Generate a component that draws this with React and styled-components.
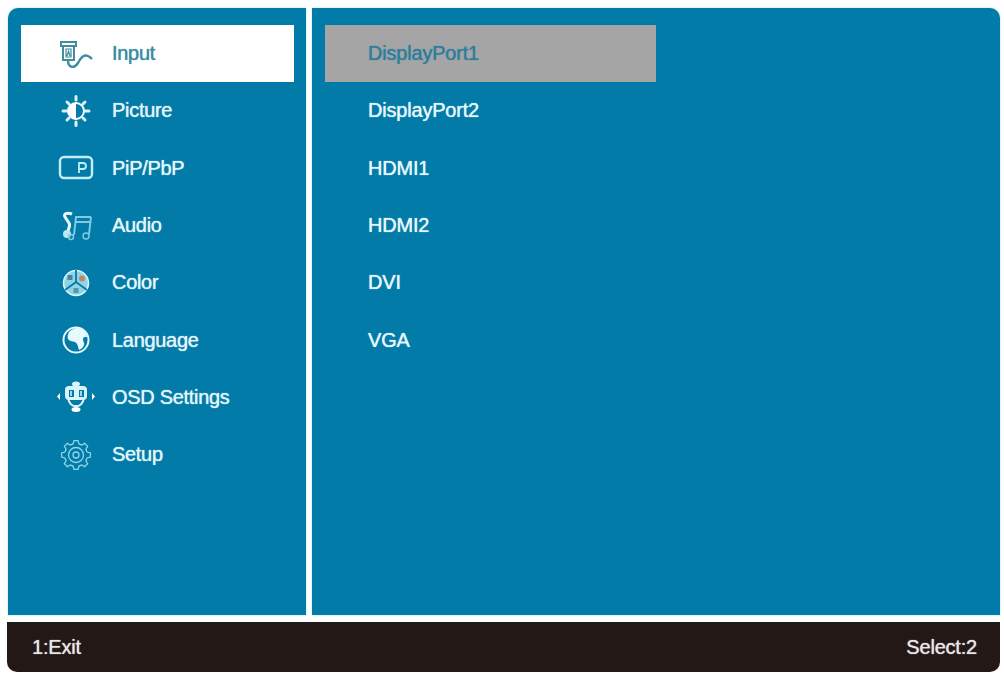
import styled, { createGlobalStyle } from 'styled-components';

const GlobalStyle = createGlobalStyle`
    html, body {
        margin: 0;
        padding: 0;
        background: #fff;
    }
`;

const Icon = styled.svg.attrs({ width: 40, height: 32, viewBox: '0 0 40 32', fill: 'none' })`
    flex: none;
    color: ${(props) => (props.$active ? '#3f8d9f' : '#c4edf5')};
`;

// 8 tooth gear outline around the middle of the icon box
const gearPath = () => {
    const pts = [];
    for (let i = 0; i < 8; i++) {
        const a = (i * Math.PI) / 4 - Math.PI / 2;
        [[-0.26, 11.500], [-0.14, 14.500], [0.14, 14.500], [0.26, 11.500]].forEach(([d, r]) => {
            pts.push(`${(20 + r * Math.cos(a + d)).toFixed(1)} ${(16 + r * Math.sin(a + d)).toFixed(1)}`);
        });
    }
    return `M${pts.join('L')}Z`;
};

const InputIcon = (props) => (
    <Icon {...props} stroke="currentColor" strokeWidth="2">
        <path d="M5 4h15v4H5zM7 8v14h11V8" />
        <path d="M10 11h5v8h-5zM11 18l1.500-5 1.500 5" strokeWidth="1.200" />
        <path d="M12 22c0 8 6 9 10 3 2.500-5 6-9 10-7 2 .8 3 2 4 3" strokeWidth="2.400" />
    </Icon>
);

const PictureIcon = (props) => (
    <Icon {...props}>
        <circle cx="20" cy="16" r="8" fill="#027ba8" stroke="#fff" strokeWidth="2" />
        <path d="M20 8a8 8 0 0 0 0 16z" fill="#fff" />
        <path d="M20 1.500v3.500M20 27v3.500M7 16h3.500M29.500 16H33M11 7l2 2M29 7l-2 2M11 25l2-2M29 25l-2-2" stroke="#d8f4fa" strokeWidth="3" strokeLinecap="round" />
    </Icon>
);

const PipIcon = (props) => (
    <Icon {...props} stroke="currentColor">
        <rect x="4" y="5" width="32" height="21" rx="4" strokeWidth="2.400" />
        <path d="M23 21V11h4a3 3 0 0 1 0 6h-4" strokeWidth="1.800" />
    </Icon>
);

const AudioIcon = (props) => (
    <Icon {...props}>
        <path d="M16 4c-5-2-9 0-7 3l4 6c2 3-1 5-1 9" stroke="#eafafd" strokeWidth="3" />
        <circle cx="11" cy="24" r="4" fill="#b9e8f2" />
        <path d="M19 7h16M19 12h16M20 7l-2 18M35 7l-2 17" stroke="#7fcbe0" strokeWidth="2" />
        <circle cx="15" cy="27" r="2.500" stroke="#7fcbe0" strokeWidth="1.500" />
        <circle cx="30" cy="26" r="3" stroke="#7fcbe0" strokeWidth="1.500" />
    </Icon>
);

const ColorIcon = (props) => (
    <Icon {...props}>
        <circle cx="20" cy="16" r="12.500" fill="#8fd3e4" stroke="#dff6fa" strokeWidth="1.500" />
        <path d="M20 3v12L9 23M20 15l11 8" stroke="#027ba8" strokeWidth="1.800" />
        <rect x="11.500" y="8" width="5" height="5" fill="#3f87a3" />
        <circle cx="26" cy="11.500" r="3" fill="#b98a66" />
        <rect x="17.500" y="21" width="5" height="5" fill="#4f98b3" />
    </Icon>
);

const LanguageIcon = (props) => (
    <Icon {...props}>
        <circle cx="20" cy="16" r="12.500" stroke="#e6f9fc" strokeWidth="2" />
        <path d="M13 8c3-3 8-5 11-4 4 1 6 4 7 9-2 0-4 0-4 2 0 3 2 4 1 6-1 3-3 4-5 5-1-3-1-6-4-8-3-1-6-1-7-3-1-2 0-5 1-7z" fill="#e6f9fc" />
    </Icon>
);

const OsdIcon = (props) => (
    <Icon {...props}>
        <path d="M4 12v7L1 15.500zM36 12v7l3-3.500z" fill="#fff" />
        <ellipse cx="20" cy="3" rx="4" ry="2.500" fill="#d8f4fa" />
        <rect x="9" y="5" width="22" height="14" rx="4" fill="#d8f4fa" />
        <path d="M13 9h5v7h-5zM23 9h5v7h-5z" fill="#027ba8" />
        <path d="M15 10v5M25 10v5" stroke="#d8f4fa" strokeWidth="1.500" />
        <path d="M12 17c1 5 4 8 6 8h4c2 0 5-3 6-8" stroke="#d8f4fa" strokeWidth="2" />
        <ellipse cx="20" cy="28.500" rx="4.500" ry="2.500" fill="#fff" />
    </Icon>
);

const SetupIcon = (props) => (
    <Icon {...props} stroke="#8fd6e8" strokeWidth="1.300">
        <path d={gearPath()} />
        <circle cx="20" cy="16" r="7.500" />
        <circle cx="20" cy="16" r="3" />
    </Icon>
);

const MENU = [
    { label: 'Input', icon: InputIcon, active: true },
    { label: 'Picture', icon: PictureIcon },
    { label: 'PiP/PbP', icon: PipIcon },
    { label: 'Audio', icon: AudioIcon },
    { label: 'Color', icon: ColorIcon },
    { label: 'Language', icon: LanguageIcon },
    { label: 'OSD Settings', icon: OsdIcon },
    { label: 'Setup', icon: SetupIcon },
];

const SOURCES = ['DisplayPort1', 'DisplayPort2', 'HDMI1', 'HDMI2', 'DVI', 'VGA'];

const App = () => {
    return (
        <Screen>
            <GlobalStyle />
            <Panels>
                <Sidebar>
                    {MENU.map((item) => (
                        <MenuRow key={item.label} $active={item.active}>
                            <item.icon $active={item.active} />
                            {item.label}
                        </MenuRow>
                    ))}
                </Sidebar>
                <Content>
                    {SOURCES.map((name, i) => (
                        <SourceRow key={name} $active={i === 0}>{name}</SourceRow>
                    ))}
                </Content>
            </Panels>
            <Footer>
                <span>1:Exit</span>
                <span>Select:2</span>
            </Footer>
        </Screen>
    );
};

const Screen = styled.div`
    width: 1004px;
    height: 673px;
    box-sizing: border-box;
    padding: 8px 4px 1px 8px;
    display: flex;
    flex-direction: column;
    gap: 7px;
    overflow: hidden;
    font-family: "Liberation Sans", Arial, sans-serif;
`;

const Panels = styled.div`
    display: flex;
    gap: 6px;
    height: 607px;
    flex: none;
`;

const Sidebar = styled.nav`
    width: 298px;
    box-sizing: border-box;
    padding: 17px 12px 0 13px;
    background: #027ba8;
    border-top-left-radius: 10px;
    box-shadow: 0 0 2px rgba(120, 210, 230, 0.8);
    display: grid;
    grid-auto-rows: 57.3px;
    align-content: start;
`;

const MenuRow = styled.div`
    display: flex;
    align-items: center;
    gap: 16px;
    padding-left: 35px;
    font-size: 20px;
    letter-spacing: -0.3px;
    text-shadow: 0 0 1px currentColor;
    background: ${(props) => (props.$active ? '#fff' : 'transparent')};
    color: ${(props) => (props.$active ? '#3d8ba3' : '#e2f6fa')};
`;

const Content = styled.main`
    flex: 1;
    box-sizing: border-box;
    padding: 17px 0 0 13px;
    background: #027ba8;
    border-top-right-radius: 10px;
    box-shadow: 0 0 2px rgba(120, 210, 230, 0.8);
    display: grid;
    grid-auto-rows: 57.3px;
    align-content: start;
`;

const SourceRow = styled.div`
    width: 331px;
    box-sizing: border-box;
    display: flex;
    align-items: center;
    padding-left: 43px;
    font-size: 20px;
    letter-spacing: -0.2px;
    text-shadow: 0 0 1px currentColor;
    background: ${(props) => (props.$active ? '#a5a5a5' : 'transparent')};
    color: ${(props) => (props.$active ? '#2f7d9c' : '#e6f8fb')};
`;

const Footer = styled.footer`
    height: 50px;
    flex: none;
    margin-left: -1px;
    box-sizing: border-box;
    padding: 0 23px 0 25px;
    display: flex;
    align-items: center;
    justify-content: space-between;
    background: #231815;
    border-radius: 0 0 10px 10px;
    color: #e8e6e5;
    font-size: 20px;
    letter-spacing: -0.2px;
    text-shadow: 0 0 1px currentColor;
`;

export default App;
